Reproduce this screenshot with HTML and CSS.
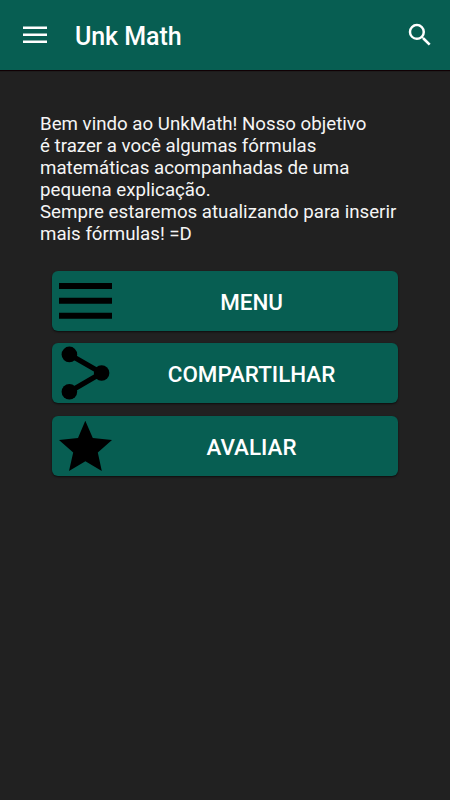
FILE: index.html
```html
<!DOCTYPE html>
<html lang="pt-BR">
<head>
    <meta charset="UTF-8">
    <meta name="viewport" content="width=device-width, initial-scale=1.0">
    <title>Unk Math</title>
    <link rel="stylesheet" href="styles.css">
</head>
<body>
    <header>
        <button class="icone-menu" aria-label="Abrir menu">
            <svg width="24" height="18" viewBox="0 0 24 18"><path d="M0 0.4h24v2.7H0zM0 7.4h24v2.7H0zM0 14.4h24v2.7H0z"/></svg>
        </button>
        <h1>Unk Math</h1>
        <button class="icone-busca" aria-label="Buscar">
            <svg width="30" height="30" viewBox="0 0 24 24"><path d="M15.5 14h-.79l-.28-.27A6.47 6.47 0 0 0 16 9.5 6.5 6.5 0 1 0 9.5 16c1.61 0 3.09-.59 4.23-1.57l.27.28v.79l5 4.99L20.49 19l-4.99-5zm-6 0C7.01 14 5 11.99 5 9.5S7.01 5 9.5 5 14 7.01 14 9.5 11.99 14 9.5 14z"/></svg>
        </button>
    </header>
    <main>
        <p class="mensagem">Bem vindo ao UnkMath! Nosso objetivo<br>é trazer a você algumas fórmulas<br>matemáticas acompanhadas de uma<br>pequena explicação.<br>Sempre estaremos atualizando para inserir<br>mais fórmulas! =D</p>
        <nav class="opcoes">
            <button class="opcao">
                <svg width="53" height="54" viewBox="0 0 53 54"><path d="M0 9h53v6H0zM0 23.8h53v6H0zM0 38.8h53v6H0z"/></svg>
                <span>MENU</span>
            </button>
            <button class="opcao">
                <svg width="53" height="54" viewBox="0 0 53 54">
                    <path d="M10.4 8.4L42.6 27 10.4 45.8" fill="none" stroke="#000" stroke-width="5.2"/>
                    <circle cx="10.4" cy="8.4" r="7.8"/>
                    <circle cx="42.6" cy="27" r="7.8"/>
                    <circle cx="10.4" cy="45.8" r="7.8"/>
                </svg>
                <span>COMPARTILHAR</span>
            </button>
            <button class="opcao">
                <svg width="53" height="54" viewBox="0 0 53 54"><path d="M26.3 1.8L33.8 19 53 21 38.8 33.6 42.8 52 26.4 42.3 10 52 14.2 33.6 0 21 19 19z"/></svg>
                <span>AVALIAR</span>
            </button>
        </nav>
    </main>
</body>
</html>
```
FILE: styles.css
```css
* {
    box-sizing: border-box;
}
body {
    margin: 0;
    min-height: 100vh;
    background-color: #212121;
    color: #ffffff;
    font-family: Roboto, sans-serif;
}
button {
    border: none;
    padding: 0;
    background: none;
    color: inherit;
    font-family: inherit;
    cursor: pointer;
}
svg {
    display: block;
}
header {
    display: flex;
    align-items: center;
    height: 70px;
    padding: 0 15.5px 0 23px;
    background-color: #075e52;
    box-shadow: 0 1px 1px #100004;
}
header svg {
    fill: #ffffff;
}
h1 {
    flex: 1;
    margin: 3px 0 0 28px;
    font-size: 25px;
    font-weight: 500;
    line-height: 30px;
    letter-spacing: -0.08px;
}
.mensagem {
    margin: 0;
    padding: 43px 0 0 40px;
    color: #f5f5f5;
    font-size: 18.7px;
    line-height: 22.1px;
    white-space: nowrap;
}
.opcoes {
    display: flex;
    flex-direction: column;
    gap: 12.3px;
    width: 345.5px;
    margin: 25.4px 0 0 52.3px;
}
.opcao {
    display: flex;
    align-items: center;
    height: 60px;
    padding: 0 6.7px;
    border-radius: 6px;
    background-color: #075e52;
    box-shadow: 0 1px 2px rgba(0, 0, 0, 0.6);
    font-size: 22.4px;
    font-weight: 500;
}
.opcao span {
    flex: 1;
    padding-top: 2.4px;
    text-align: center;
}
```
